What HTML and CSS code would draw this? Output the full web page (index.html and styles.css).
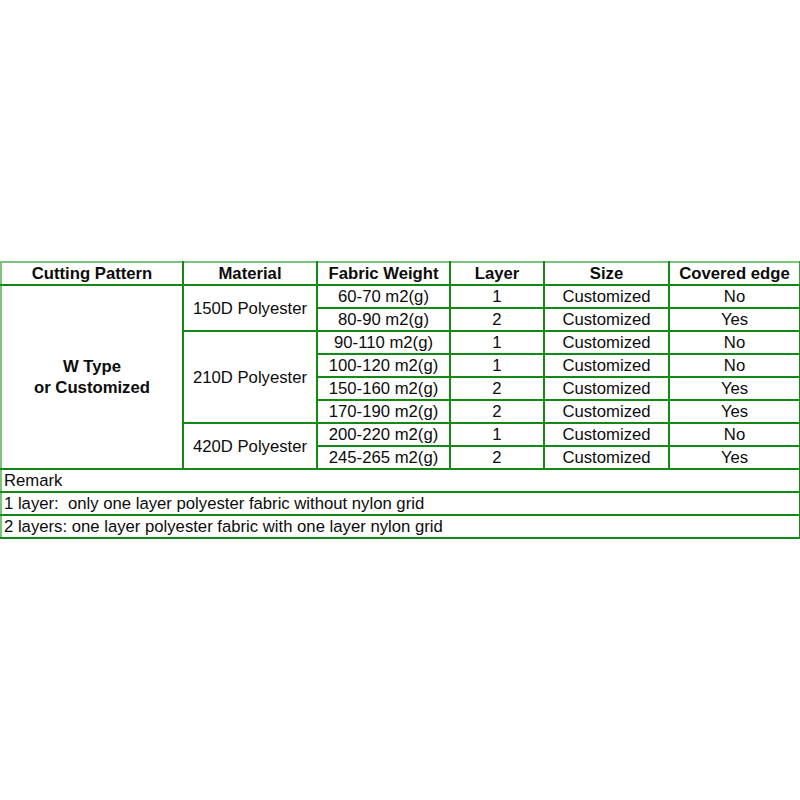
FILE: index.html
```html
<!DOCTYPE html>
<html>
<head>
<meta charset="utf-8">
<link rel="stylesheet" href="styles.css">
</head>
<body>
<div class="page">
<table class="spec">
  <colgroup>
    <col class="c1"><col class="c2"><col class="c3"><col class="c4"><col class="c5"><col class="c6">
  </colgroup>
  <tr class="head">
    <th>Cutting Pattern</th><th>Material</th><th>Fabric Weight</th><th>Layer</th><th>Size</th><th>Covered edge</th>
  </tr>
  <tr>
    <td rowspan="8" class="pattern">W Type<br>or Customized</td>
    <td rowspan="2">150D Polyester</td>
    <td>60-70 m2(g)</td><td>1</td><td>Customized</td><td>No</td>
  </tr>
  <tr><td>80-90 m2(g)</td><td>2</td><td>Customized</td><td>Yes</td></tr>
  <tr>
    <td rowspan="4">210D Polyester</td>
    <td>90-110 m2(g)</td><td>1</td><td>Customized</td><td>No</td>
  </tr>
  <tr><td>100-120 m2(g)</td><td>1</td><td>Customized</td><td>No</td></tr>
  <tr><td>150-160 m2(g)</td><td>2</td><td>Customized</td><td>Yes</td></tr>
  <tr><td>170-190 m2(g)</td><td>2</td><td>Customized</td><td>Yes</td></tr>
  <tr>
    <td rowspan="2">420D Polyester</td>
    <td>200-220 m2(g)</td><td>1</td><td>Customized</td><td>No</td>
  </tr>
  <tr><td>245-265 m2(g)</td><td>2</td><td>Customized</td><td>Yes</td></tr>
  <tr><td colspan="6" class="note">Remark</td></tr>
  <tr><td colspan="6" class="note">1 layer:&nbsp; only one layer polyester fabric without nylon grid</td></tr>
  <tr><td colspan="6" class="note">2 layers: one layer polyester fabric with one layer nylon grid</td></tr>
</table>
</div>
</body>
</html>
```
FILE: styles.css
```css
html, body {
  margin: 0;
  padding: 0;
  background: #ffffff;
}
.page {
  height: 800px;
  display: flex;
  align-items: center;
}
.spec {
  border-collapse: collapse;
  table-layout: fixed;
  width: 799px;
  font-family: "Liberation Sans", Arial, sans-serif;
  font-size: 16.7px;
  color: #0c0c0c;
  border: 2px solid #7cc47c;
}
.c1 { width: 182px; }
.c2 { width: 134px; }
.c3 { width: 133px; }
.c4 { width: 94px; }
.c5 { width: 125px; }
.c6 { width: 131px; }
.spec th, .spec td {
  border: 2px solid #138a13;
  padding: 0;
  height: 21px;
  text-align: center;
  vertical-align: middle;
  line-height: 19px;
  white-space: nowrap;
}
.spec th {
  font-weight: bold;
  border-top-color: #7cc47c;
}
.spec th:first-child, .spec td.pattern, .spec td.note {
  border-left-color: #7cc47c;
}
.spec th:last-child {
  border-right-color: #3c9c3c;
}
.spec td.pattern {
  font-weight: bold;
  line-height: 21px;
}
.spec td.note {
  text-align: left;
  padding-left: 2px;
}
```
